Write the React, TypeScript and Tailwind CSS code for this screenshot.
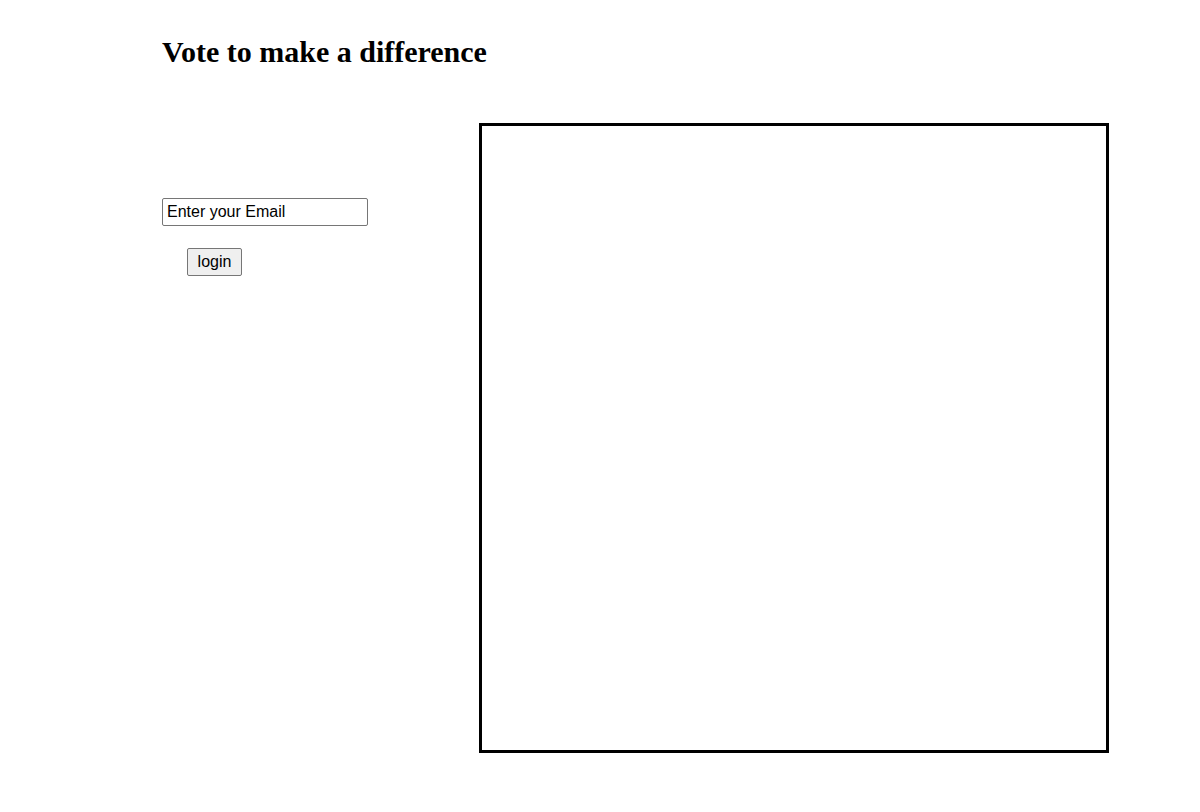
import React, { useState } from 'react';

export default function App() {
  const [email, setEmail] = useState('Enter your Email');

  return (
    <div className="min-h-screen bg-white pl-[162px] pt-[34px] font-['Liberation_Sans',Arial,sans-serif] text-black">
      <h1 className="font-['Liberation_Serif','Times_New_Roman',serif] text-[30px] font-bold leading-[35px]">
        Vote to make a difference
      </h1>

      <div className="mt-[54px] flex">
        {/* login form */}
        <div className="flex w-[317px] flex-col items-start pt-[75px]">
          <input
            type="text"
            value={email}
            onChange={(e) => setEmail(e.target.value)}
            className="h-[28px] w-[206px] rounded-[2px] border border-[#767676] px-[4px] text-[16px] leading-[20px] outline-none"
          />
          <button className="ml-[25px] mt-[22px] h-[28px] w-[55px] rounded-[2px] border border-[#767676] bg-[#efefef] text-[16px] leading-[20px]">
            login
          </button>
        </div>

        {/* board */}
        <div className="h-[630px] w-[630px] border-[3px] border-black" />
      </div>
    </div>
  );
}
